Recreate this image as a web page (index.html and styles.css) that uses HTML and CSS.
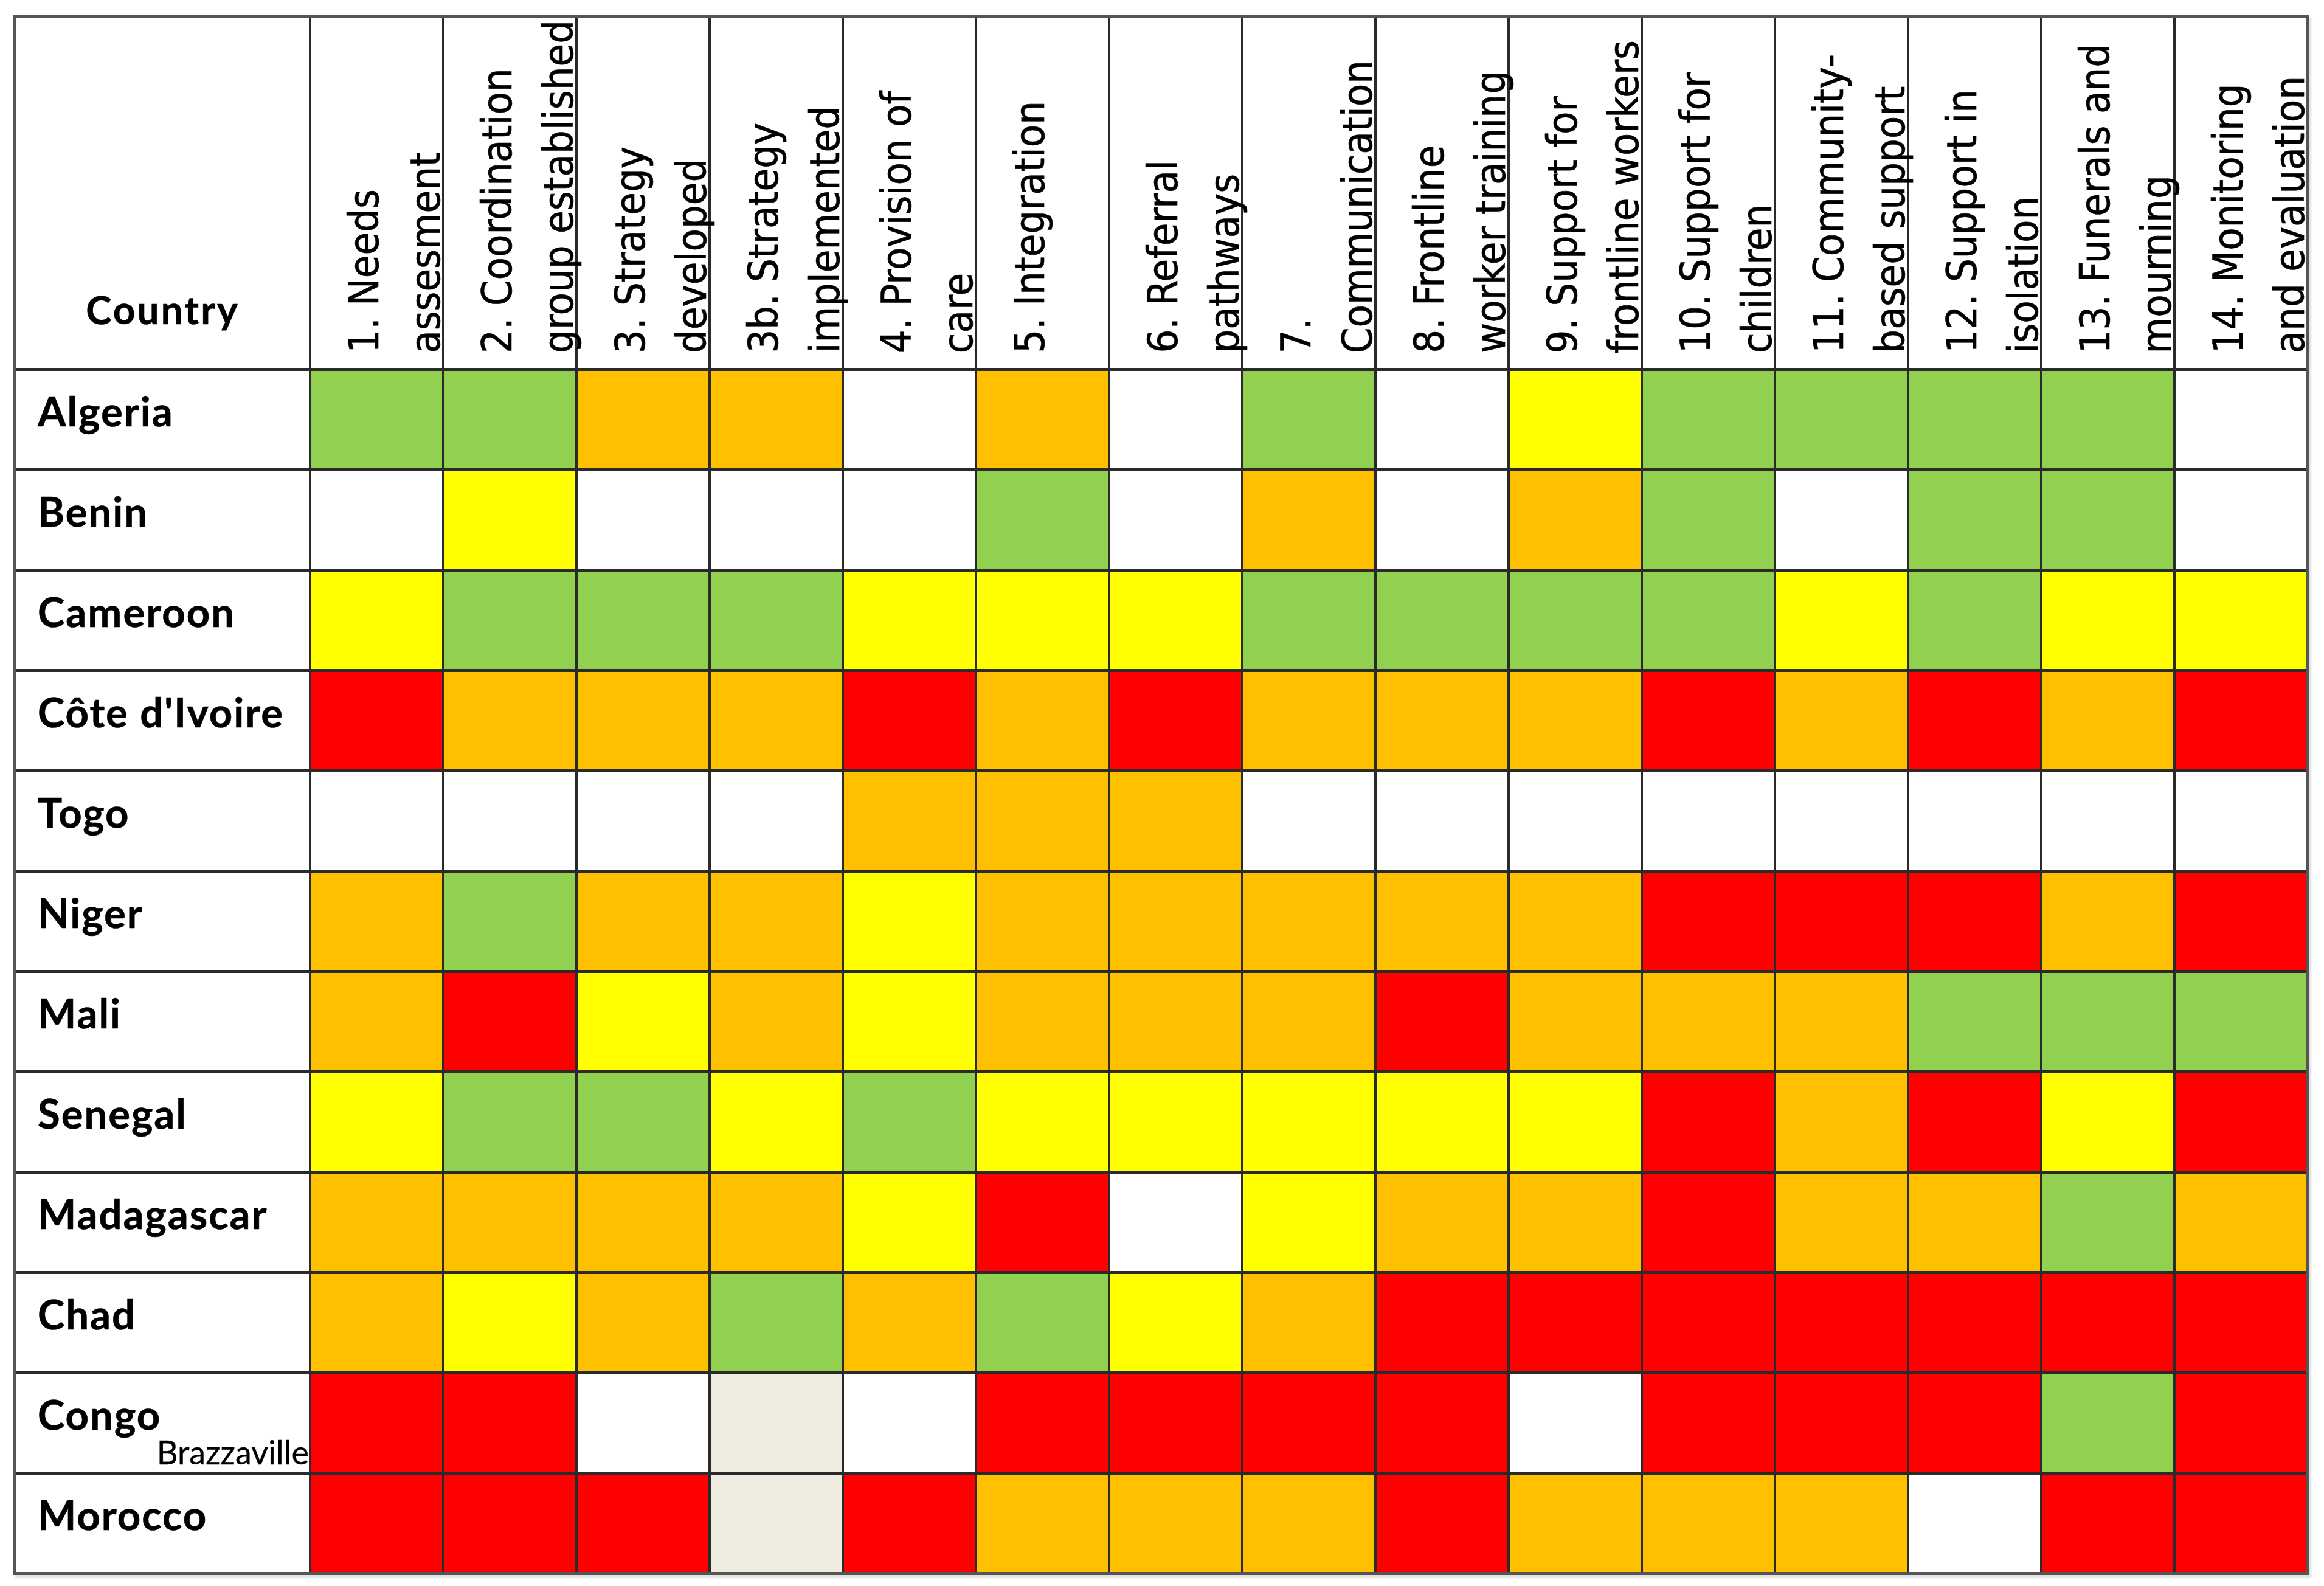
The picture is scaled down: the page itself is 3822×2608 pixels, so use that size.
FILE: index.html
```html
<!DOCTYPE html>
<html lang="en">
<head>
<meta charset="utf-8">
<title>Country progress matrix</title>
<link rel="stylesheet" href="styles.css">
</head>
<body>
<div class="chart">
  <div class="hcell hcountry"><span class="hcountry-label">Country</span></div>
  <div class="hcell"><span class="vlabel">1. Needs<br>assesment</span></div>
  <div class="hcell"><span class="vlabel">2. Coordination<br>group established</span></div>
  <div class="hcell"><span class="vlabel">3. Strategy<br>developed</span></div>
  <div class="hcell"><span class="vlabel">3b. Strategy<br>implemented</span></div>
  <div class="hcell"><span class="vlabel">4. Provision of<br>care</span></div>
  <div class="hcell"><span class="vlabel">5. Integration</span></div>
  <div class="hcell"><span class="vlabel">6. Referral<br>pathways</span></div>
  <div class="hcell"><span class="vlabel">7.<br>Communication</span></div>
  <div class="hcell"><span class="vlabel">8. Frontline<br>worker training</span></div>
  <div class="hcell"><span class="vlabel">9. Support for<br>frontline workers</span></div>
  <div class="hcell"><span class="vlabel">10. Support for<br>children</span></div>
  <div class="hcell"><span class="vlabel">11. Community-<br>based support</span></div>
  <div class="hcell"><span class="vlabel">12. Support in<br>isolation</span></div>
  <div class="hcell"><span class="vlabel">13. Funerals and<br>mourning</span></div>
  <div class="hcell"><span class="vlabel">14. Monitoring<br>and evaluation</span></div>

  <div class="country">Algeria</div>
  <div class="c g"></div><div class="c g"></div><div class="c o"></div><div class="c o"></div><div class="c w"></div><div class="c o"></div><div class="c w"></div><div class="c g"></div><div class="c w"></div><div class="c y"></div><div class="c g"></div><div class="c g"></div><div class="c g"></div><div class="c g"></div><div class="c w"></div>

  <div class="country">Benin</div>
  <div class="c w"></div><div class="c y"></div><div class="c w"></div><div class="c w"></div><div class="c w"></div><div class="c g"></div><div class="c w"></div><div class="c o"></div><div class="c w"></div><div class="c o"></div><div class="c g"></div><div class="c w"></div><div class="c g"></div><div class="c g"></div><div class="c w"></div>

  <div class="country">Cameroon</div>
  <div class="c y"></div><div class="c g"></div><div class="c g"></div><div class="c g"></div><div class="c y"></div><div class="c y"></div><div class="c y"></div><div class="c g"></div><div class="c g"></div><div class="c g"></div><div class="c g"></div><div class="c y"></div><div class="c g"></div><div class="c y"></div><div class="c y"></div>

  <div class="country">Côte d'Ivoire</div>
  <div class="c r"></div><div class="c o"></div><div class="c o"></div><div class="c o"></div><div class="c r"></div><div class="c o"></div><div class="c r"></div><div class="c o"></div><div class="c o"></div><div class="c o"></div><div class="c r"></div><div class="c o"></div><div class="c r"></div><div class="c o"></div><div class="c r"></div>

  <div class="country">Togo</div>
  <div class="c w"></div><div class="c w"></div><div class="c w"></div><div class="c w"></div><div class="c o"></div><div class="c o"></div><div class="c o"></div><div class="c w"></div><div class="c w"></div><div class="c w"></div><div class="c w"></div><div class="c w"></div><div class="c w"></div><div class="c w"></div><div class="c w"></div>

  <div class="country">Niger</div>
  <div class="c o"></div><div class="c g"></div><div class="c o"></div><div class="c o"></div><div class="c y"></div><div class="c o"></div><div class="c o"></div><div class="c o"></div><div class="c o"></div><div class="c o"></div><div class="c r"></div><div class="c r"></div><div class="c r"></div><div class="c o"></div><div class="c r"></div>

  <div class="country">Mali</div>
  <div class="c o"></div><div class="c r"></div><div class="c y"></div><div class="c o"></div><div class="c y"></div><div class="c o"></div><div class="c o"></div><div class="c o"></div><div class="c r"></div><div class="c o"></div><div class="c o"></div><div class="c o"></div><div class="c g"></div><div class="c g"></div><div class="c g"></div>

  <div class="country">Senegal</div>
  <div class="c y"></div><div class="c g"></div><div class="c g"></div><div class="c y"></div><div class="c g"></div><div class="c y"></div><div class="c y"></div><div class="c y"></div><div class="c y"></div><div class="c y"></div><div class="c r"></div><div class="c o"></div><div class="c r"></div><div class="c y"></div><div class="c r"></div>

  <div class="country">Madagascar</div>
  <div class="c o"></div><div class="c o"></div><div class="c o"></div><div class="c o"></div><div class="c y"></div><div class="c r"></div><div class="c w"></div><div class="c y"></div><div class="c o"></div><div class="c o"></div><div class="c r"></div><div class="c o"></div><div class="c o"></div><div class="c g"></div><div class="c o"></div>

  <div class="country">Chad</div>
  <div class="c o"></div><div class="c y"></div><div class="c o"></div><div class="c g"></div><div class="c o"></div><div class="c g"></div><div class="c y"></div><div class="c o"></div><div class="c r"></div><div class="c r"></div><div class="c r"></div><div class="c r"></div><div class="c r"></div><div class="c r"></div><div class="c r"></div>

  <div class="country country-sub">Congo<span class="sub">Brazzaville</span></div>
  <div class="c r"></div><div class="c r"></div><div class="c w"></div><div class="c b"></div><div class="c w"></div><div class="c r"></div><div class="c r"></div><div class="c r"></div><div class="c r"></div><div class="c w"></div><div class="c r"></div><div class="c r"></div><div class="c r"></div><div class="c g"></div><div class="c r"></div>

  <div class="country">Morocco</div>
  <div class="c r"></div><div class="c r"></div><div class="c r"></div><div class="c b"></div><div class="c r"></div><div class="c o"></div><div class="c o"></div><div class="c o"></div><div class="c r"></div><div class="c o"></div><div class="c o"></div><div class="c o"></div><div class="c w"></div><div class="c r"></div><div class="c r"></div>
</div>
</body>
</html>
```

FILE: styles.css
```css
html, body {
  margin: 0;
  padding: 0;
  background: #ffffff;
}

body {
  width: 3822px;
  height: 2608px;
  overflow: hidden;
}

.chart {
  display: grid;
  grid-template-columns: 481px repeat(15, 215px);
  grid-template-rows: 576px repeat(12, 160px);
  column-gap: 4px;
  row-gap: 5px;
  margin: 24px 0 0 22px;
  width: max-content;
  background: #2a2a2a;
  border: 5px solid #555555;
  box-shadow: 3px 5px 3px rgba(0, 0, 0, 0.12);
}

.hcell {
  background: #ffffff;
  display: flex;
  align-items: flex-end;
  justify-content: flex-start;
  padding: 0 0 24px 36px;
  box-sizing: border-box;
  overflow: visible;
  min-width: 0;
}

.vlabel {
  writing-mode: vertical-rl;
  transform: rotate(180deg);
  white-space: nowrap;
  font-family: "DejaVu Sans Condensed", "DejaVu Sans", sans-serif;
  font-stretch: 87.5%;
  font-size: 68px;
  line-height: 101px;
  color: #000000;
  -webkit-text-stroke: 0.6px #000000;
}

.hcountry {
  justify-content: center;
  padding: 0 0 57px 0;
}

.hcountry-label {
  font-family: Lato, "Liberation Sans", sans-serif;
  font-weight: 700;
  font-size: 64px;
  letter-spacing: 3px;
  line-height: 1.2;
  color: #000000;
  -webkit-text-stroke: 0.6px #000000;
}

.country {
  background: #ffffff;
  font-family: Lato, "Liberation Sans", sans-serif;
  font-weight: 700;
  font-size: 67px;
  letter-spacing: 2px;
  line-height: 1.2;
  color: #000000;
  -webkit-text-stroke: 0.6px #000000;
  padding: 25px 0 0 35px;
  box-sizing: border-box;
  white-space: nowrap;
}

.country-sub {
  display: flex;
  flex-direction: column;
}

.sub {
  align-self: flex-end;
  font-weight: 400;
  font-size: 54px;
  line-height: 1;
  letter-spacing: 0;
  margin: -4px 0 0 0;
  -webkit-text-stroke: 0.3px #000000;
}

.c { background: #ffffff; }
.c.g { background: #92d050; }
.c.o { background: #ffc000; }
.c.y { background: #ffff00; }
.c.r { background: #ff0000; }
.c.b { background: #eeece1; }
.c.w { background: #ffffff; }
```
